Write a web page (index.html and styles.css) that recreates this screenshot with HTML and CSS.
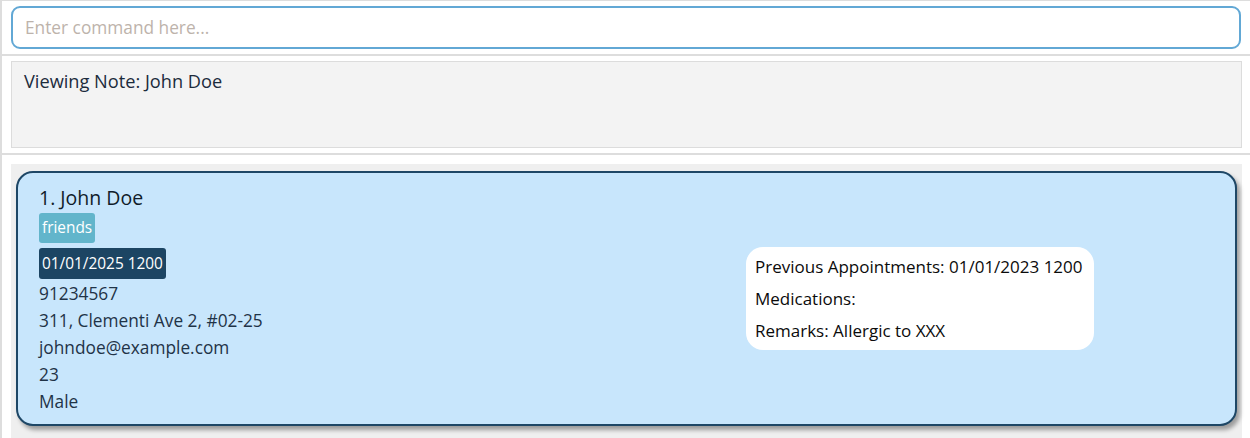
FILE: index.html
```html
<!DOCTYPE html>
<html>
<head>
<meta charset="utf-8">
<link rel="stylesheet" href="styles.css">
</head>
<body>
<div class="app">
  <div class="cmd-section">
    <div class="cmd-box">
      <input class="cmd-input" type="text" placeholder="Enter command here...">
    </div>
  </div>
  <div class="result-section">
    <div class="result-box">Viewing Note: John Doe</div>
  </div>
  <div class="list-section">
    <div class="list">
      <div class="card">
        <div class="card-left">
          <div class="name">1. John Doe</div>
          <div class="tags"><span class="tag">friends</span></div>
          <div class="appts"><span class="appt">01/01/2025 1200</span></div>
          <div class="field">91234567</div>
          <div class="field">311, Clementi Ave 2, #02-25</div>
          <div class="field">johndoe@example.com</div>
          <div class="field">23</div>
          <div class="field">Male</div>
        </div>
        <div class="note">
          <div class="note-line">Previous Appointments: 01/01/2023 1200</div>
          <div class="note-line">Medications:</div>
          <div class="note-line">Remarks: Allergic to XXX</div>
        </div>
      </div>
    </div>
  </div>
</div>
</body>
</html>
```
FILE: styles.css
```css
html, body {
  margin: 0;
  padding: 0;
  background: #ffffff;
  font-family: "Open Sans", "Noto Sans", sans-serif;
}
.app {
  width: 1250px;
  height: 438px;
  box-sizing: border-box;
  border-left: 2px solid #dddddd;
  border-top: 1px solid #dddddd;
  overflow: hidden;
}
.cmd-section {
  padding: 5px 9px 5px 9px;
  border-bottom: 2px solid #dddddd;
}
.cmd-box {
  height: 43px;
  box-sizing: border-box;
  border: 2px solid #62a8d5;
  border-radius: 9px;
  background: #ffffff;
  display: flex;
  align-items: center;
  padding-left: 12px;
}
.cmd-input {
  border: none;
  outline: none;
  width: 100%;
  background: transparent;
  font-family: inherit;
  font-size: 17.3px;
  color: #333;
  padding: 0;
}
.cmd-input::placeholder {
  color: #bdb3ab;
}
.result-section {
  padding: 5px 8px 5px 9px;
  border-bottom: 2px solid #dddddd;
}
.result-box {
  height: 87px;
  box-sizing: border-box;
  border: 1px solid #dcdcdc;
  background: #f3f3f3;
  padding: 8px 12px;
  font-size: 18.2px;
  color: #1c2b3c;
  line-height: 22px;
}
.list-section {
  padding: 9px 8px 0 9px;
}
.list {
  background: #efefef;
  padding: 7px 5px 12px 5px;
  height: 290px;
  box-sizing: border-box;
}
.card {
  height: 255px;
  box-sizing: border-box;
  border: 2px solid #1e4766;
  border-radius: 17px;
  background: #c8e6fc;
  box-shadow: 3px 4px 4px rgba(0, 0, 0, 0.35);
  display: flex;
  align-items: center;
  padding: 0 0 0 21px;
}
.card-left {
  width: 707px;
  display: flex;
  flex-direction: column;
  align-self: flex-start;
  padding-top: 11px;
  color: #1f3347;
}
.name {
  font-size: 19.5px;
  line-height: 27px;
  color: #101c2a;
}
.tags {
  display: flex;
  margin-top: 2px;
}
.tag {
  background: #62b5cb;
  color: #ffffff;
  font-size: 15.4px;
  line-height: 30px;
  padding: 0 3px;
  border-radius: 3px;
}
.appts {
  display: flex;
  margin-top: 5px;
}
.appt {
  background: #1c4563;
  color: #ffffff;
  font-size: 15.4px;
  line-height: 31px;
  padding: 0 3px;
  border-radius: 3px;
}
.field {
  font-size: 17.3px;
  line-height: 27px;
}
.appts + .field {
  margin-top: 1px;
}
.note {
  background: #ffffff;
  border-radius: 17px;
  padding: 4px 10px 3px 9px;
  width: 348px;
  box-sizing: border-box;
}
.note-line {
  font-size: 17px;
  line-height: 32px;
  color: #0b0b0b;
}
```
